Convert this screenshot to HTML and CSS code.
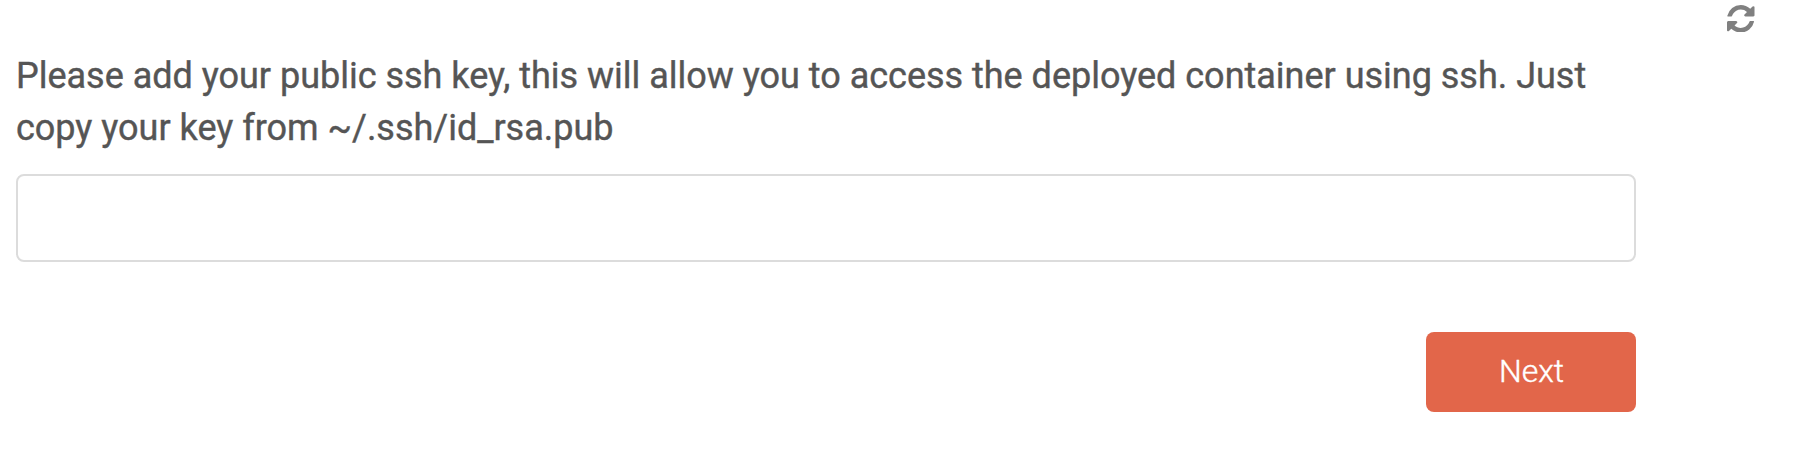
FILE: index.html
```
<!DOCTYPE html>
<html lang="en">
<head>
<meta charset="utf-8">
<title>SSH key</title>
<link rel="stylesheet" href="styles.css">
</head>
<body>
<div class="panel">
  <form class="form">
    <label class="label" for="key">Please add your public ssh key, this will allow you to access the deployed container using ssh. Just copy your key from ~/.ssh/id_rsa.pub</label>
    <input class="input" id="key" type="text">
    <button class="next" type="button">Next</button>
  </form>
  <svg class="refresh" viewBox="128 128 1536 1536" aria-label="Refresh"><path d="M1639 1056q0 5-1 7-64 268-268 434.5t-478 166.5q-146 0-282.5-55t-243.5-157l-129 129q-19 19-45 19t-45-19-19-45v-448q0-26 19-45t45-19h448q26 0 45 19t19 45-19 45l-137 137q71 66 161 102t187 36q134 0 250-65t186-179q11-17 53-117 8-23 30-23h192q13 0 22.5 9.5t9.5 22.5zm25-800v448q0 26-19 45t-45 19h-448q-26 0-45-19t-19-45 19-45l138-138q-148-137-349-137-134 0-250 65t-186 179q-11 17-53 117-8 23-30 23h-199q-13 0-22.5-9.5t-9.5-22.5v-7q65-268 270-434.5t480-166.5q146 0 284 55.5t245 156.5l130-129q19-19 45-19t45 19 19 45z"/></svg>
</div>
</body>
</html>
```
FILE: styles.css
```
body { margin: 0; background: #fff; font-family: Roboto, sans-serif; color: #555; }
.panel { display: flex; align-items: flex-start; }
.form { display: flex; flex-direction: column; width: 1620px; margin: 50px 0 0 16px; }
.label { font-size: 36px; line-height: 52px; letter-spacing: -0.01px; -webkit-text-stroke: 0.4px #555; }
.input { box-sizing: border-box; height: 88px; margin: 20px 0 70px; padding: 0 24px; border: 2px solid #dcdcdc; border-radius: 8px; font: 32px Roboto, sans-serif; }
.next { align-self: flex-end; width: 210px; height: 80px; padding: 0 0 2px 1px; border: 0; border-radius: 8px; background: #e2664a; color: #fff; font: 300 32px Roboto, sans-serif; -webkit-text-stroke: 0.4px #fff; }
.refresh { width: 27.5px; height: 27.5px; margin: 4.5px 0 0 91px; fill: #808080; }
```
